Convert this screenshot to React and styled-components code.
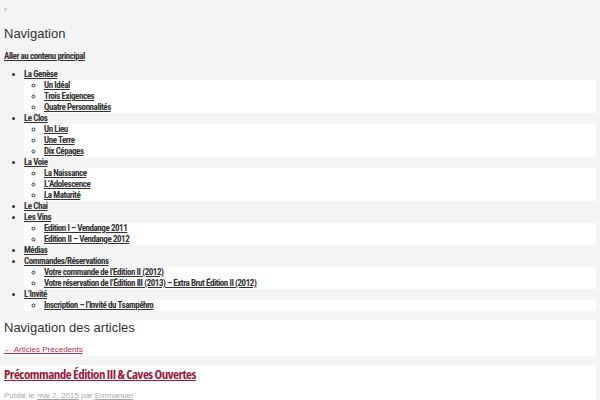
import React from "react";
import styled, { createGlobalStyle, css } from "styled-components";

const Global = createGlobalStyle`
  html, body { margin: 0; padding: 0; background: #f4f4f4; }
  body { font-family: "Liberation Sans", Arial, sans-serif; color: #333; }
`;

const condensed = css`
  font-family: "Roboto", sans-serif;
  font-stretch: 75%;
  font-weight: bold;
  font-size: 9px;
  letter-spacing: -0.45px;
  line-height: 11px;
`;

const Page = styled.div`
  width: 596px;
  padding: 0 4px 0 0;
`;

const Dot = styled.div`
  width: 3px;
  height: 3px;
  background: #d8d8d8;
  margin: 8px 0 0 4px;
`;

const Heading = styled.h2`
  margin: ${p => p.$mt || 0}px 0 0 4px;
  font-family: "Liberation Sans", Arial, sans-serif;
  font-weight: normal;
  font-size: 13px;
  line-height: ${p => p.$lh || 16}px;
  color: #333;
`;

const NavLink = styled.a`
  color: #333;
  text-decoration: underline;
`;

const Skip = styled.div`
  ${condensed}
  margin: 7px 0 0 4px;
`;

const Menu = styled.ul`
  ${condensed}
  margin: 7px 0 0 0;
  padding: 0 0 0 24px;
  list-style: disc;
`;

const SubMenu = styled.ul`
  margin: 0;
  padding: 0 0 0 20px;
  list-style: circle;
  background: #fff;
`;

const Item = styled.li`
  line-height: 11px;
`;

const Box = styled.section`
  background: #fff;
  margin-top: ${p => p.$mt}px;
  padding-bottom: ${p => p.$pb || 0}px;
`;

const PrevLink = styled.a`
  display: block;
  margin: 8px 0 0 4px;
  font-family: "Liberation Sans", Arial, sans-serif;
  font-size: 8px;
  line-height: 12px;
  color: #b0305a;
  text-decoration: underline;
`;

const Title = styled.a`
  display: block;
  margin-left: 4px;
  font-family: "Open Sans", sans-serif;
  font-stretch: 75%;
  font-weight: bold;
  font-size: 13px;
  letter-spacing: -0.5px;
  line-height: 18px;
  color: #9c1a3e;
  text-decoration: underline;
`;

const Meta = styled.div`
  margin: 7px 0 0 4px;
  font-family: "Liberation Sans", Arial, sans-serif;
  font-size: 8px;
  line-height: 12px;
  color: #aaa;
`;

const MetaLink = styled.a`
  color: #aaa;
  text-decoration: underline;
`;

const menu = [
  ["La Genèse", ["Un Idéal", "Trois Exigences", "Quatre Personnalités"]],
  ["Le Clos", ["Un Lieu", "Une Terre", "Dix Cépages"]],
  ["La Voie", ["La Naissance", "L’Adolescence", "La Maturité"]],
  ["Le Chai", []],
  ["Les Vins", ["Edition I – Vendange 2011", "Edition II – Vendange 2012"]],
  ["Médias", []],
  ["Commandes/Réservations", ["Votre commande de l’Edition II (2012)", "Votre réservation de l’Édition III (2013) – Extra Brut Édition II (2012)"]],
  ["L’Invité", ["Inscription – l’Invité du Tsampéhro"]],
];

export default function App() {
  return (
    <Page>
      <Global />
      <Dot />
      <Heading $mt={13} $lh={20}>Navigation</Heading>
      <Skip><NavLink href="#">Aller au contenu principal</NavLink></Skip>
      <Menu>
        {menu.map(([label, subs]) => (
          <Item key={label}>
            <NavLink href="#">{label}</NavLink>
            {subs.length > 0 && (
              <SubMenu>
                {subs.map(s => (
                  <Item key={s}><NavLink href="#">{s}</NavLink></Item>
                ))}
              </SubMenu>
            )}
          </Item>
        ))}
      </Menu>
      <Box $mt={9}>
        <Heading $lh={16}>Navigation des articles</Heading>
        <PrevLink href="#">← Articles Précédents</PrevLink>
      </Box>
      <Box $mt={9} $pb={10}>
        <Title href="#">Précommande Édition III &amp; Caves Ouvertes</Title>
        <Meta>Publié le <MetaLink href="#">mai 7, 2015</MetaLink> par <MetaLink href="#">Emmanuel</MetaLink></Meta>
      </Box>
    </Page>
  );
}
